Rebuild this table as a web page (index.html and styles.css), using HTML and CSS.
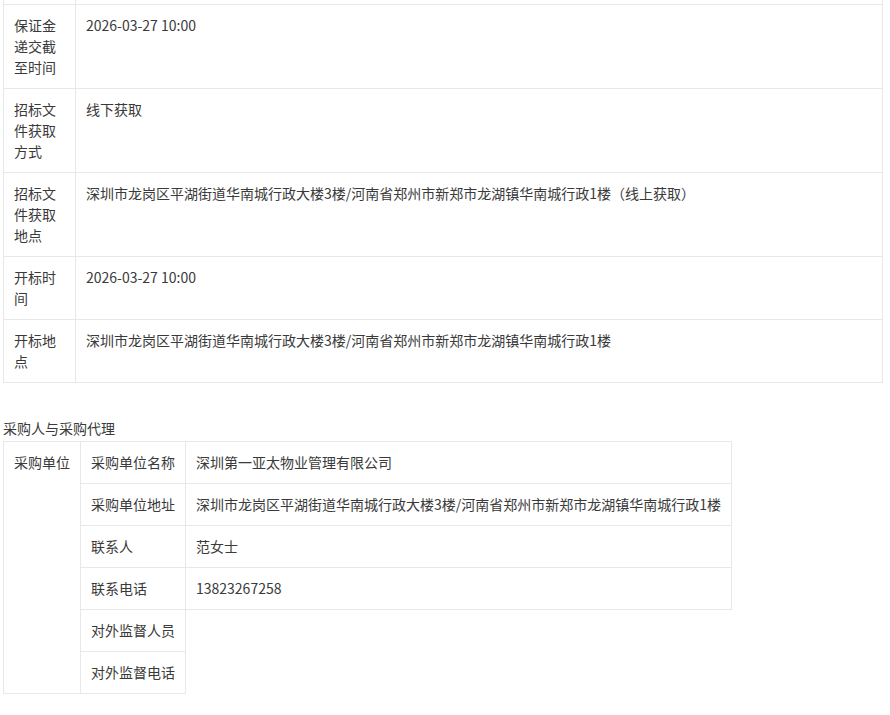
FILE: index.html
```html
<!DOCTYPE html>
<html lang="zh-CN">
<head>
<meta charset="utf-8">
<title>招标信息</title>
<link rel="stylesheet" href="styles.css">
</head>
<body>
<div class="page">
  <table class="info">
    <colgroup><col class="info-label-col"><col></colgroup>
    <tr class="cut"><td></td><td></td></tr>
    <tr><th>保证金递交截至时间</th><td>2026-03-27 10:00</td></tr>
    <tr><th>招标文件获取方式</th><td>线下获取</td></tr>
    <tr><th>招标文件获取地点</th><td>深圳市龙岗区平湖街道华南城行政大楼3楼/河南省郑州市新郑市龙湖镇华南城行政1楼（线上获取）</td></tr>
    <tr><th>开标时间</th><td>2026-03-27 10:00</td></tr>
    <tr><th>开标地点</th><td>深圳市龙岗区平湖街道华南城行政大楼3楼/河南省郑州市新郑市龙湖镇华南城行政1楼</td></tr>
  </table>

  <h3 class="sub-title">采购人与采购代理</h3>

  <table class="buyer">
    <tr><th rowspan="6">采购单位</th><td>采购单位名称</td><td>深圳第一亚太物业管理有限公司</td></tr>
    <tr><td>采购单位地址</td><td>深圳市龙岗区平湖街道华南城行政大楼3楼/河南省郑州市新郑市龙湖镇华南城行政1楼</td></tr>
    <tr><td>联系人</td><td>范女士</td></tr>
    <tr><td>联系电话</td><td>13823267258</td></tr>
    <tr><td>对外监督人员</td></tr>
    <tr><td>对外监督电话</td></tr>
  </table>
</div>
</body>
</html>
```

FILE: styles.css
```css
html, body {
  margin: 0;
  padding: 0;
  background: #ffffff;
}

body {
  font-family: "Noto Sans CJK SC", "Microsoft YaHei", sans-serif;
  font-size: 14px;
  line-height: 21px;
  color: #3a3a3a;
}

.page {
  padding: 0 3px;
}

table {
  border-collapse: collapse;
  border-spacing: 0;
}

th, td {
  font-weight: normal;
  text-align: left;
  vertical-align: top;
  padding: 10px;
  border: 1px solid #e8e8e8;
}

.info {
  width: 880px;
  table-layout: fixed;
}

.info-label-col {
  width: 72px;
}

.info .cut td {
  padding: 0;
  height: 4px;
  border-top: none;
}

.sub-title {
  margin: 35px 0 2px;
  font-size: 14px;
  font-weight: normal;
  line-height: 21px;
}

.buyer td, .buyer th {
  white-space: nowrap;
}
```
